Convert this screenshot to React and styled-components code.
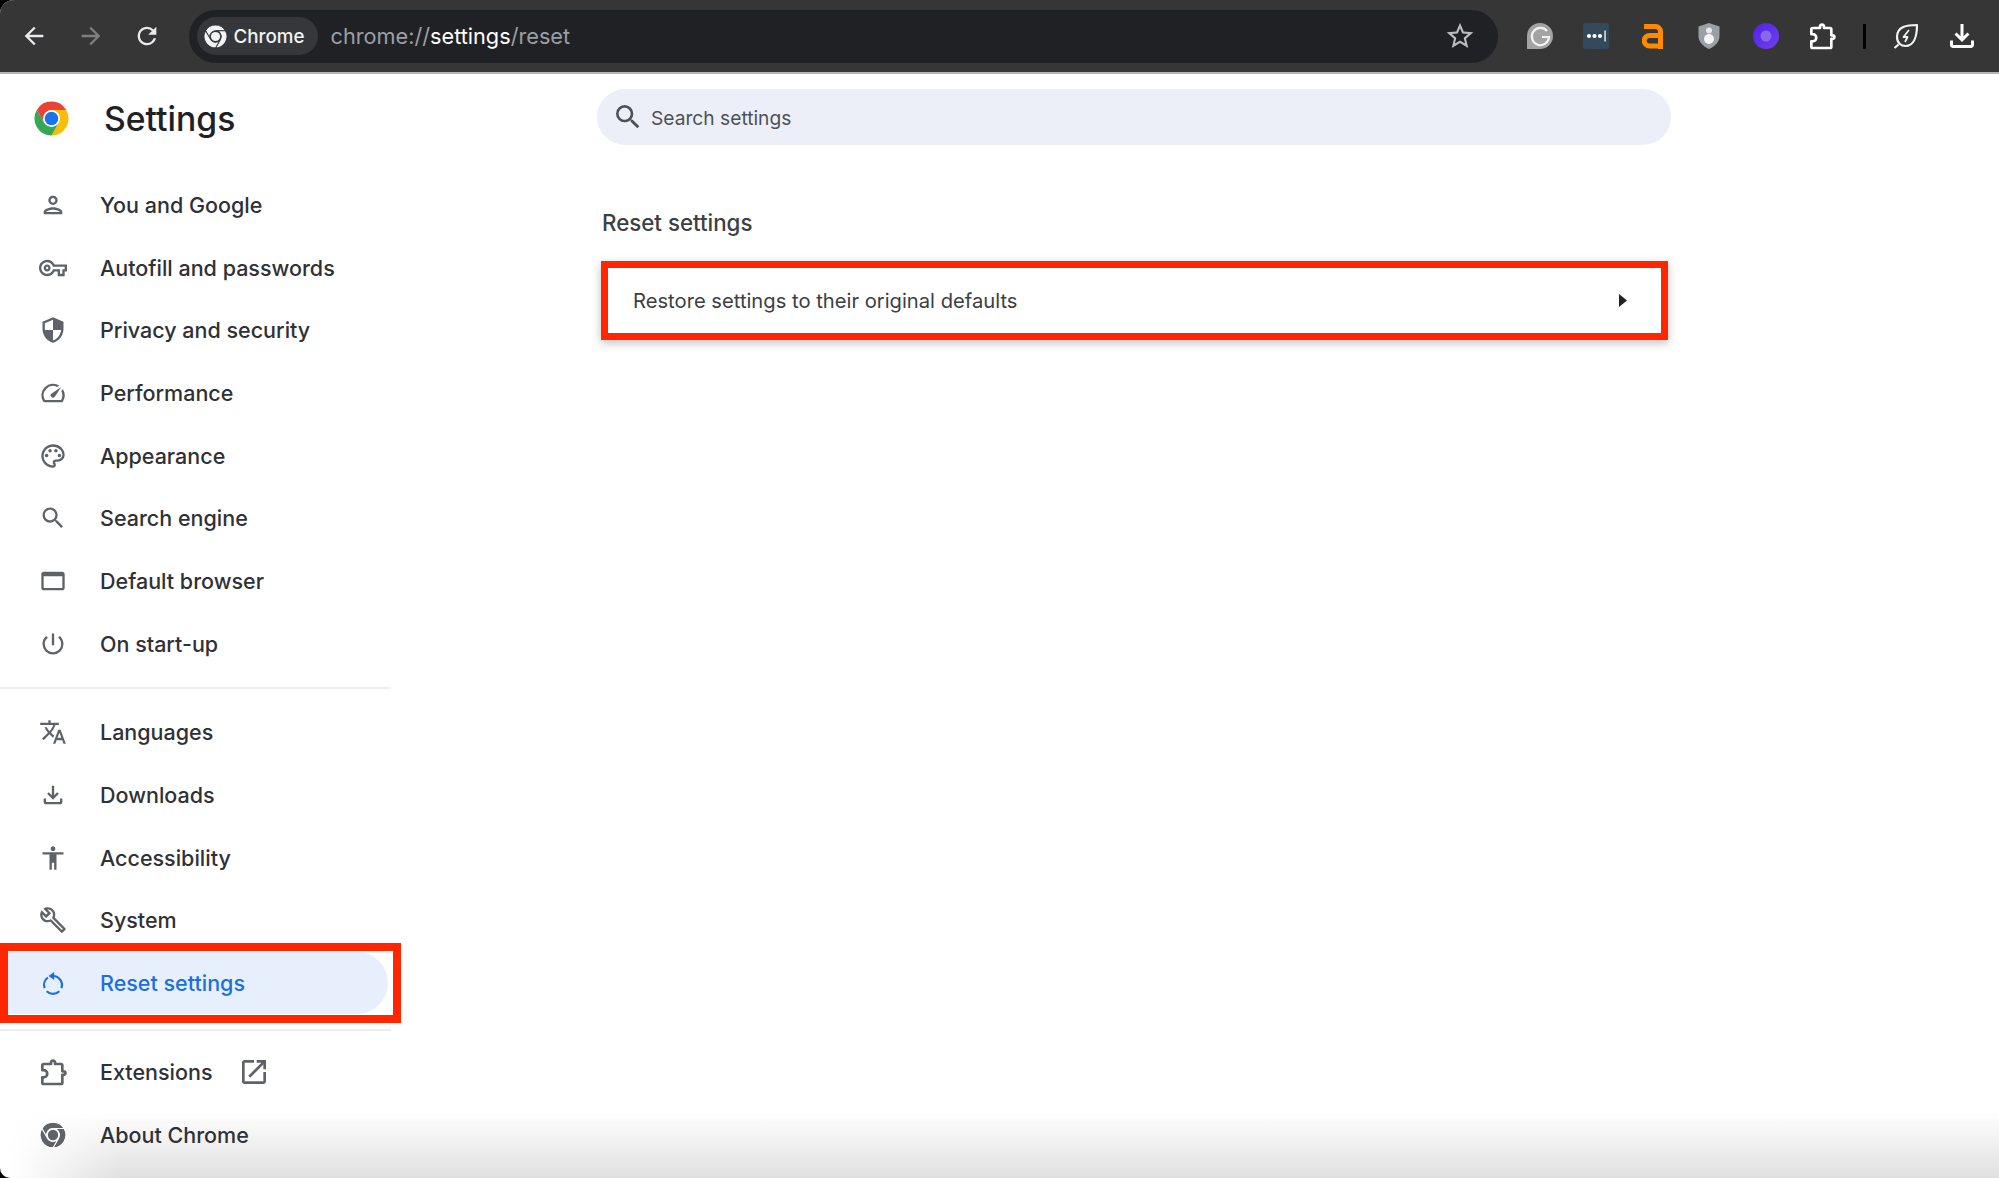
import React from 'react';
import styled, { createGlobalStyle } from 'styled-components';

const GlobalStyle = createGlobalStyle`
    html, body { margin: 0; padding: 0; background: #000; }
    body { font-family: 'Inter', 'Liberation Sans', sans-serif; }
`;

const Frame = styled.div`
    position: relative;
    width: 100%;
    height: 100vh;
    display: flex;
    flex-direction: column;
    overflow: hidden;
    background: #fff;
    border-radius: 14px 0 0 10px;
`;

const Toolbar = styled.header`
    flex: none;
    height: 72px;
    display: flex;
    align-items: center;
    padding-left: 6px;
    background: #363636;
    border-bottom: 2px solid #b4b4b4;
`;

const ToolSlot = styled.div`
    flex: none;
    width: ${(p) => p.$width || 56.5}px;
    display: flex;
    align-items: center;
    justify-content: center;
    color: ${(p) => p.$color || '#e8eaed'};
`;

const Omnibox = styled.div`
    flex: none;
    width: 1309px;
    height: 53px;
    margin: 0 14px 0 13px;
    padding: 0 19px 0 8px;
    box-sizing: border-box;
    display: flex;
    align-items: center;
    background: #202124;
    border-radius: 27px;
`;

const Chip = styled.div`
    width: 121px;
    height: 38px;
    box-sizing: border-box;
    padding-left: 6px;
    display: flex;
    align-items: center;
    gap: 6px;
    background: #36373a;
    border-radius: 19px;
    color: #f1f3f4;
    font-size: 18.8px;
    font-weight: 500;
`;

const Url = styled.div`
    flex: 1;
    margin-left: 13px;
    font-size: 21.7px;
    color: #9aa0a6;
    b { font-weight: 400; color: #fff; }
`;

const Separator = styled.div`
    width: 3px;
    height: 25px;
    background: #000;
`;

const Body = styled.div`
    flex: 1;
    display: flex;
`;

const Sidebar = styled.nav`
    flex: none;
    width: 391px;
    margin-right: 206px;
`;

const Brand = styled.div`
    height: 99.5px;
    box-sizing: border-box;
    padding: 0 0 11.5px 33px;
    display: flex;
    align-items: center;
    gap: 34px;
    font-size: 33.7px;
    font-weight: 500;
    color: #202124;
`;

const NavGroup = styled.div`
    display: flex;
    flex-direction: column;
`;

const NavRow = styled.div`
    position: relative;
    z-index: 1;
    height: 62.7px;
    width: 388px;
    box-sizing: border-box;
    padding-left: 39px;
    display: flex;
    align-items: center;
    gap: 33px;
    font-size: 21.5px;
    font-weight: 500;
    color: ${(p) => (p.$active ? '#1a6fe0' : '#2f3136')};
    background: ${(p) => (p.$active ? '#e7effd' : 'transparent')};
    border-radius: ${(p) => (p.$active ? '0 32px 32px 0' : '0')};
`;

const NavLabel = styled.span`
    white-space: nowrap;
`;

const ExternalMark = styled.span`
    display: flex;
    margin-left: -8px;
    color: #5f6368;
`;

const Highlight = styled.div`
    position: absolute;
    top: -8.5px;
    left: 0;
    width: 401px;
    height: 80px;
    box-sizing: border-box;
    border: 8px solid #ff2600;
`;

const Rule = styled.hr`
    margin: ${(p) => p.$margin};
    height: 2px;
    border: 0;
    background: #eeeeee;
`;

const Content = styled.main`
    flex: none;
    width: 1074px;
    padding-top: 15px;
`;

const SearchBar = styled.div`
    height: 56px;
    box-sizing: border-box;
    padding-left: 15px;
    display: flex;
    align-items: center;
    gap: 7px;
    background: #eceff8;
    border-radius: 28px;
    font-size: 19.2px;
    color: #4d5156;
`;

const SearchLabel = styled.span`
    padding-top: 2px;
`;

const SectionTitle = styled.h2`
    margin: 58px 0 0 5px;
    height: 38px;
    display: flex;
    align-items: center;
    font-size: 22.3px;
    font-weight: 500;
    color: #3c4043;
`;

const ResetCard = styled.div`
    margin: 20px 0 0 4px;
    width: 1067px;
    height: 79px;
    box-sizing: border-box;
    padding: 0 34px 0 25px;
    display: flex;
    align-items: center;
    justify-content: space-between;
    border: 7px solid #ff2600;
    box-shadow: 0 3px 9px rgba(0, 0, 0, 0.25);
    font-size: 20.2px;
    font-weight: 400;
    color: #3c4043;
`;

const WindowShade = styled.div`
    position: absolute;
    left: 0;
    right: 0;
    bottom: 0;
    height: 66px;
    pointer-events: none;
    background: linear-gradient(to bottom, rgba(226, 226, 226, 0), #e0e0e0);
    mask-image: linear-gradient(to right, transparent 10px, #000 120px);
`;

const Icon = ({ d, size = 28, children }) => (
    <svg width={size} height={size} viewBox="0 0 24 24" fill="currentColor">
        {d && <path d={d} />}
        {children}
    </svg>
);

const sector = 'M2.47 6.5A11 11 0 0 1 21.53 6.5H12A5.5 5.5 0 0 0 7.24 14.75Z';

const ChromeMark = ({ size, colors, hub, gap }) => (
    <svg width={size} height={size} viewBox="0 0 24 24">
        {colors.map((c, i) => (
            <path key={i} d={sector} fill={c} stroke={gap} strokeWidth={gap ? 0.9 : 0} transform={`rotate(${i * 120} 12 12)`} />
        ))}
        <circle cx="12" cy="12" r="4.4" fill={hub} />
    </svg>
);

const PuzzleIcon = ({ size }) => (
    <svg width={size} height={size} viewBox="0 0 24 24" fill="none" stroke="currentColor" strokeWidth="2" strokeLinejoin="round">
        <path d="M5 6h5.5V4.5a1.6 1.6 0 0 1 3 0V6H18a1 1 0 0 1 1 1v4.5h1a1.3 1.3 0 0 1 0 2.6h-1V20a1 1 0 0 1-1 1H5a1 1 0 0 1-1-1v-4h1a2.7 2.7 0 0 0 0-5.4H4V7a1 1 0 0 1 1-1z" />
    </svg>
);

const ResetIcon = () => (
    <svg width="28" height="28" viewBox="0 0 24 24" fill="none" stroke="currentColor" strokeWidth="1.9">
        <path d="M12 6a7.700 7.700 0 0 1 7.200 10.300" />
        <path d="M17.400 19.100a7.700 7.700 0 0 1-10.800 0" />
        <path d="M4.800 16.300a7.700 7.700 0 0 1 2.800-8.900" />
        <path d="M13 2.500v7l-4.800-3.500z" fill="currentColor" stroke="none" />
    </svg>
);

const GrammarlyMark = () => (
    <svg width="28" height="28" viewBox="0 0 28 28" fill="none">
        <path d="M1 27V14a13 13 0 1 1 13 13z" fill="#a3a3a3" />
        <path d="M21 9a8.6 8.6 0 1 0 2 6h-7" stroke="#f2f2f2" strokeWidth="2.2" />
    </svg>
);

const PasswordMark = () => (
    <svg width="26" height="26" viewBox="0 0 26 26">
        <rect width="26" height="26" rx="2.5" fill="#35495c" />
        <circle cx="6" cy="13" r="2.1" fill="#fff" />
        <circle cx="11.5" cy="13" r="2.1" fill="#fff" />
        <circle cx="17" cy="13" r="2.1" fill="#fff" />
        <rect x="21.4" y="7.5" width="1.3" height="11" fill="#fff" />
    </svg>
);

const OrangeMark = () => (
    <svg width="22" height="26" viewBox="0 0 22 26" fill="none" stroke="#ff8a00" strokeWidth="5">
        <path d="M2 3.5h11.5a5 5 0 0 1 5 5V26" />
        <path d="M18.5 12.5H7.5a5 5 0 0 0 0 10.5h11" />
    </svg>
);

const ShieldMark = () => (
    <svg width="22" height="26" viewBox="0 0 22 26">
        <path d="M11 0l10.5 3.5v9.5c0 6-4.500 10.500-10.500 13C5 23.500.5 19 .5 13V3.500z" fill="#9aa0a6" />
        <circle cx="11" cy="7.500" r="3" fill="#e8eaed" />
        <circle cx="11" cy="16" r="5" fill="#f5f5f5" />
    </svg>
);

const PurpleMark = () => (
    <svg width="26" height="26" viewBox="0 0 26 26">
        <defs>
            <linearGradient id="purple" x1="0" y1="0" x2="1" y2="1">
                <stop offset="0" stopColor="#4f22e6" />
                <stop offset="1" stopColor="#7040ee" />
            </linearGradient>
        </defs>
        <circle cx="13" cy="13" r="13" fill="url(#purple)" />
        <circle cx="13" cy="13" r="5.500" fill="#8a68ee" />
    </svg>
);

const LeafMark = () => (
    <svg width="28" height="28" viewBox="0 0 28 28" fill="none" stroke="#f1f3f4" strokeWidth="2.2" strokeLinejoin="round">
        <path d="M25 3c-10 0-20 1.500-20 12 0 6 4 9 8.500 9C21.500 24 25 15 25 3z" />
        <path d="M2.500 26l4-3.500" />
        <path d="M17 8l-5.500 7h4l-2.500 5" strokeWidth="1.800" />
    </svg>
);

const paths = {
    back: 'M20 11H7.83l5.59-5.59L12 4l-8 8 8 8 1.41-1.41L7.83 13H20v-2z',
    forward: 'M12 4l-1.41 1.41L16.17 11H4v2h12.17l-5.58 5.590L12 20l8-8z',
    reload: 'M17.65 6.35A7.958 7.958 0 0 0 12 4c-4.42 0-7.99 3.58-7.99 8s3.57 8 7.990 8c3.73 0 6.84-2.55 7.73-6h-2.080A5.990 5.990 0 0 1 12 18c-3.310 0-6-2.690-6-6s2.690-6 6-6c1.660 0 3.140.69 4.220 1.780L13 11h7V4l-2.350 2.350z',
    star: 'M22 9.240l-7.190-.620L12 2 9.190 8.630 2 9.240l5.460 4.730L5.820 21 12 17.270 18.180 21l-1.630-7.030L22 9.240zM12 15.400l-3.760 2.270 1-4.280-3.320-2.880 4.380-.380L12 6.100l1.710 4.040 4.380.380-3.320 2.880 1 4.280L12 15.400z',
    download: 'M18 15v3H6v-3H4v3c0 1.100.900 2 2 2h12c1.100 0 2-.900 2-2v-3h-2zm-1-4l-1.410-1.410L13 12.170V4h-2v8.170L8.410 9.590 7 11l5 5 5-5z',
    person: 'M12 6c1.100 0 2 .900 2 2s-.900 2-2 2-2-.900-2-2 .900-2 2-2m0 10c2.700 0 5.800 1.290 6 2H6c.230-.720 3.310-2 6-2m0-12C9.790 4 8 5.790 8 8s1.790 4 4 4 4-1.790 4-4-1.790-4-4-4zm0 10c-2.670 0-8 1.340-8 4v2h16v-2c0-2.660-5.330-4-8-4z',
    key: 'M22 19h-6v-4h-2.680c-1.140 2.420-3.600 4-6.320 4-3.860 0-7-3.140-7-7s3.140-7 7-7c2.720 0 5.170 1.580 6.320 4H24v6h-2v4zm-4-2h2v-4h2v-2H11.940l-.230-.670C11.010 8.340 9.110 7 7 7c-2.760 0-5 2.240-5 5s2.240 5 5 5c2.110 0 4.010-1.340 4.710-3.330l.230-.670H18v4zM7 15c-1.650 0-3-1.350-3-3s1.350-3 3-3 3 1.350 3 3-1.350 3-3 3zm0-4c-.550 0-1 .450-1 1s.450 1 1 1 1-.450 1-1-.450-1-1-1z',
    shield: 'M12 1 3 5v6c0 5.550 3.840 10.740 9 12 5.160-1.260 9-6.450 9-12V5l-9-4zm0 10.990h7c-.530 4.120-3.280 7.790-7 8.940V12H5V6.300l7-3.110v8.800z',
    speed: 'M20.380 8.570l-1.230 1.850a8 8 0 0 1-.220 7.580H5.070A8 8 0 0 1 15.580 6.850l1.850-1.230A10 10 0 0 0 3.350 19a2 2 0 0 0 1.720 1h13.850a2 2 0 0 0 1.740-1 10 10 0 0 0-.270-10.440zm-9.790 6.840a2 2 0 0 0 2.830 0l5.660-8.490-8.490 5.660a2 2 0 0 0 0 2.830z',
    palette: 'M12 22C6.490 22 2 17.510 2 12S6.490 2 12 2s10 4.040 10 9c0 3.310-2.690 6-6 6h-1.770c-.280 0-.500.220-.500.500 0 .120.050.230.130.330.410.470.640 1.060.640 1.670 0 1.380-1.120 2.500-2.500 2.500zm0-18c-4.410 0-8 3.590-8 8s3.590 8 8 8c.280 0 .500-.220.500-.500 0-.160-.080-.280-.140-.350-.410-.460-.630-1.050-.630-1.650 0-1.380 1.120-2.500 2.500-2.500H16c2.210 0 4-1.790 4-4 0-3.860-3.590-7-8-7z',
    search: 'M15.500 14h-.790l-.280-.270A6.471 6.471 0 0 0 16 9.500 6.500 6.500 0 1 0 9.500 16c1.610 0 3.090-.590 4.230-1.570l.270.280v.790l5 4.990L20.490 19l-4.990-5zm-6 0C7.010 14 5 11.990 5 9.500S7.010 5 9.500 5 14 7.010 14 9.500 11.990 14 9.500 14z',
    browser: 'M20 4H4c-1.110 0-2 .900-2 2v12c0 1.100.890 2 2 2h16c1.100 0 2-.900 2-2V6c0-1.100-.890-2-2-2zm0 14H4V8h16v10z',
    power: 'M13 3h-2v10h2V3zm4.830 2.170l-1.420 1.420A6.920 6.920 0 0 1 19 12c0 3.870-3.130 7-7 7A6.995 6.995 0 0 1 7.580 6.580L6.170 5.170A8.932 8.932 0 0 0 3 12a9 9 0 0 0 18 0c0-2.740-1.230-5.180-3.170-6.830z',
    translate: 'M12.870 15.070l-2.540-2.510.030-.030A17.520 17.520 0 0 0 14.070 6H17V4h-7V2H8v2H1v1.990h11.170C11.500 7.920 10.440 9.750 9 11.350 8.070 10.320 7.300 9.190 6.690 8h-2c.730 1.630 1.730 3.170 2.980 4.560l-5.090 5.020L4 19l5-5 3.110 3.110.760-2.040zM18.500 10h-2L12 22h2l1.120-3h4.750L21 22h2l-4.500-12zm-2.620 7l1.620-4.330L19.120 17h-3.240z',
    accessibility: 'M12 2c1.100 0 2 .900 2 2s-.900 2-2 2-2-.900-2-2 .900-2 2-2zm9 7h-6v13h-2v-6h-2v6H9V9H3V7h18v2z',
    build: 'M22.610 18.990l-9.080-9.080c.930-2.340.450-5.100-1.440-7C9.790.610 6.210.400 3.660 2.250L7.500 6.100 6.080 7.510 2.250 3.690C.400 6.230.610 9.820 2.910 12.110c1.860 1.860 4.570 2.350 6.890 1.480l9.110 9.110c.390.390 1.020.390 1.410 0l2.300-2.300c.400-.380.400-1.010-.010-1.410zm-3 1.600l-9.460-9.460c-.610.450-1.290.720-2 .820-1.360.200-2.790-.210-3.830-1.250C3.370 9.760 2.930 8.500 3 7.260l3.090 3.090 4.240-4.240-3.090-3.090c1.240-.070 2.490.370 3.440 1.310a4.469 4.469 0 0 1 1.240 3.960 4.350 4.350 0 0 1-.880 1.960l9.460 9.460-.880.880z',
    external: 'M19 19H5V5h7V3H5a2 2 0 0 0-2 2v14a2 2 0 0 0 2 2h14c1.100 0 2-.900 2-2v-7h-2v7zM14 3v2h3.590l-9.830 9.830 1.410 1.410L19 6.410V10h2V3h-7z',
};

const Palette = () => (
    <Icon d={paths.palette}>
        <circle cx="6.500" cy="11.500" r="1.500" />
        <circle cx="9.500" cy="7.500" r="1.500" />
        <circle cx="14.500" cy="7.500" r="1.500" />
        <circle cx="17.500" cy="11.500" r="1.500" />
    </Icon>
);

const greyMark = <ChromeMark size={28} colors={['#5f6368', '#5f6368', '#5f6368']} hub="#5f6368" gap="#fff" />;

const firstGroup = [
    ['You and Google', <Icon d={paths.person} />],
    ['Autofill and passwords', <Icon d={paths.key} />],
    ['Privacy and security', <Icon d={paths.shield} />],
    ['Performance', <Icon d={paths.speed} />],
    ['Appearance', <Palette />],
    ['Search engine', <Icon d={paths.search} />],
    ['Default browser', <Icon d={paths.browser} />],
    ['On start-up', <Icon d={paths.power} />],
];

const secondGroup = [
    ['Languages', <Icon d={paths.translate} />],
    ['Downloads', <Icon d={paths.download} />],
    ['Accessibility', <Icon d={paths.accessibility} />],
    ['System', <Icon d={paths.build} />],
];

const NavIcon = styled.span`
    flex: none;
    width: 28px;
    height: 28px;
    display: flex;
    align-items: center;
    justify-content: center;
    color: ${(p) => (p.$active ? '#1a6fe0' : '#5f6368')};
    svg { flex: none; }
`;

const Item = ({ label, icon, active, children }) => (
    <NavRow $active={active}>
        <NavIcon $active={active}>{icon}</NavIcon>
        <NavLabel>{label}</NavLabel>
        {children}
    </NavRow>
);

const App = () => {
    return (
        <Frame>
            <GlobalStyle />
            <Toolbar>
                <ToolSlot><Icon d={paths.back} /></ToolSlot>
                <ToolSlot $color="#7f7f7f"><Icon d={paths.forward} /></ToolSlot>
                <ToolSlot><Icon d={paths.reload} /></ToolSlot>
                <Omnibox>
                    <Chip>
                        <ChromeMark size={25} colors={['#f1f3f4', '#f1f3f4', '#f1f3f4']} hub="#f1f3f4" gap="#36373a" />
                        Chrome
                    </Chip>
                    <Url>chrome://<b>settings</b>/reset</Url>
                    <ToolSlot $width={38} $color="#b9bbbe"><Icon d={paths.star} size={32} /></ToolSlot>
                </Omnibox>
                <ToolSlot><GrammarlyMark /></ToolSlot>
                <ToolSlot><PasswordMark /></ToolSlot>
                <ToolSlot><OrangeMark /></ToolSlot>
                <ToolSlot><ShieldMark /></ToolSlot>
                <ToolSlot><PurpleMark /></ToolSlot>
                <ToolSlot $color="#fff"><PuzzleIcon size={32} /></ToolSlot>
                <ToolSlot $width={27}><Separator /></ToolSlot>
                <ToolSlot><LeafMark /></ToolSlot>
                <ToolSlot $color="#fff"><Icon d={paths.download} size={36} /></ToolSlot>
            </Toolbar>
            <Body>
                <Sidebar>
                    <Brand>
                        <ChromeMark size={37} colors={['#ea4335', '#fbbc04', '#34a853']} hub="#1a73e8" />
                        Settings
                    </Brand>
                    <NavGroup>
                        {firstGroup.map(([label, icon]) => <Item key={label} label={label} icon={icon} />)}
                    </NavGroup>
                    <Rule $margin="11.5px 0 12.5px" />
                    <NavGroup>
                        {secondGroup.map(([label, icon]) => <Item key={label} label={label} icon={icon} />)}
                        <Item label="Reset settings" icon={<ResetIcon />} active>
                            <Highlight />
                        </Item>
                    </NavGroup>
                    <Rule $margin="14.500px 0 10px" />
                    <NavGroup>
                        <Item label="Extensions" icon={<PuzzleIcon size={32} />}>
                            <ExternalMark><Icon d={paths.external} size={32} /></ExternalMark>
                        </Item>
                        <Item label="About Chrome" icon={greyMark} />
                    </NavGroup>
                </Sidebar>
                <Content>
                    <SearchBar>
                        <Icon d={paths.search} size={32} />
                        <SearchLabel>Search settings</SearchLabel>
                    </SearchBar>
                    <SectionTitle>Reset settings</SectionTitle>
                    <ResetCard>
                        Restore settings to their original defaults
                        <svg width="8" height="13" viewBox="0 0 8 13"><path d="M0 0l8 6.500L0 13z" fill="#202124" /></svg>
                    </ResetCard>
                </Content>
            </Body>
            <WindowShade />
        </Frame>
    );
};

export default App;
